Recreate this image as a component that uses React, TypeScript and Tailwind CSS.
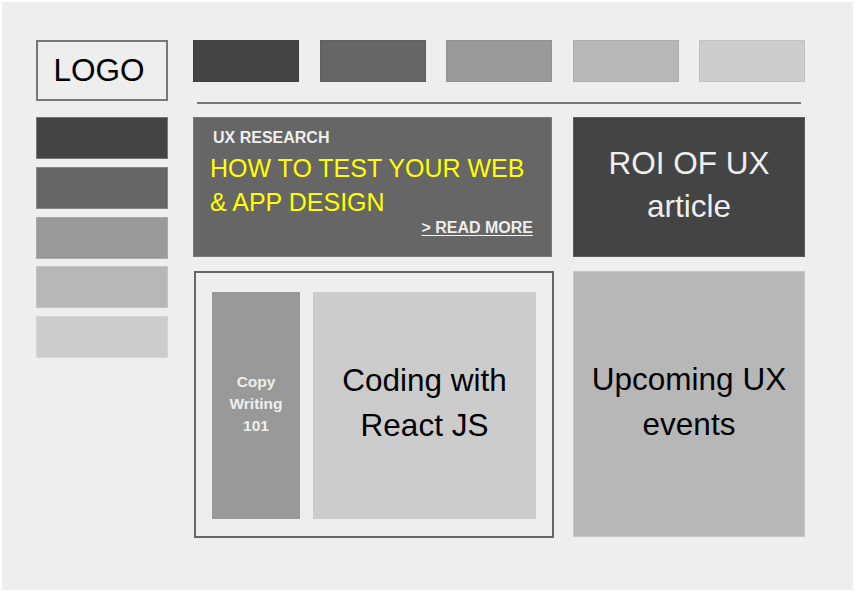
const NAV = ['bg-[#444444]', 'bg-[#666666]', 'bg-[#999999]', 'bg-[#b7b7b7]', 'bg-[#cccccc]']

const SIDE = [
  'bg-[#444444] border-[#777777]',
  'bg-[#666666] border-[#888888]',
  'bg-[#999999] border-[#aaaaaa]',
  'bg-[#b7b7b7] border-[#c4c4c4]',
  'bg-[#cccccc] border-[#d6d6d6]',
]

export default function App() {
  return (
    <div className="w-[856px] h-[592px] bg-white p-[2px] font-['Liberation_Sans',Arial,sans-serif]">
      <div className="w-[851px] h-[588px] bg-[#eeeeee] flex pl-[34px] pt-[38px]">
        {/* left column: logo + side menu */}
        <div className="w-[132px] flex flex-col">
          <div className="h-[61px] border-2 border-[#777777] bg-[#eeeeee] flex items-center justify-center pr-[6px]">
            <span className="text-[31.5px] leading-none text-black">LOGO</span>
          </div>
          <div className="mt-[16px] flex flex-col gap-[7.75px]">
            {SIDE.map((c, i) => (
              <div key={i} className={`h-[42px] border ${c}`} />
            ))}
          </div>
        </div>

        {/* right column */}
        <div className="ml-[25px] w-[612px] flex flex-col">
          <div className="grid grid-cols-5 gap-[20.5px] h-[42px]">
            {NAV.map((c, i) => (
              <div key={i} className={`${c} border border-black/5`} />
            ))}
          </div>
          <div className="mx-[4px] mt-[20px] h-[2px] bg-[#777777]" />

          <div className="mt-[13px] grid grid-cols-[359px_232px] gap-x-[21px] gap-y-[14px]">
            {/* feature article */}
            <div className="h-[140px] bg-[#666666] border border-[#7a7a7a] flex flex-col pl-[16px] pt-[10px]">
              <div className="ml-[3px] text-[16px] leading-[20px] font-bold text-[#eeeeee]">UX RESEARCH</div>
              <div className="mt-[3px] text-[25px] leading-[34px] text-[#ffff00]">
                HOW TO TEST YOUR WEB
                <br />& APP DESIGN
              </div>
              <div className="self-end pr-[18px] text-[16px] leading-[18px] font-bold text-[#eeeeee] underline underline-offset-2">
                &gt; READ MORE
              </div>
            </div>

            <div className="h-[140px] bg-[#444444] border border-[#5a5a5a] flex items-center justify-center text-center">
              <div className="text-[31.5px] leading-[43px] text-[#eeeeee] pb-[4px]">
                ROI OF UX
                <br />article
              </div>
            </div>

            {/* bottom left group */}
            <div className="ml-px w-[360px] h-[267px] border-2 border-[#666666] flex gap-[13px] pl-[16px] pr-[16px] pt-[19px] pb-[17px]">
              <div className="w-[88px] bg-[#999999] flex items-center justify-center text-center">
                <div className="text-[15.5px] leading-[22px] font-bold text-[#eeeeee] pb-[4px]">
                  Copy
                  <br />Writing
                  <br />101
                </div>
              </div>
              <div className="flex-1 bg-[#cccccc] flex items-center justify-center text-center">
                <div className="text-[31.5px] leading-[45px] text-black pb-[6px]">
                  Coding with
                  <br />React JS
                </div>
              </div>
            </div>

            <div className="h-[266px] bg-[#b7b7b7] border border-[#c6c6c6] flex items-center justify-center text-center">
              <div className="text-[31.5px] leading-[45px] text-black pb-[4px]">
                Upcoming UX
                <br />events
              </div>
            </div>
          </div>
        </div>
      </div>
    </div>
  )
}
